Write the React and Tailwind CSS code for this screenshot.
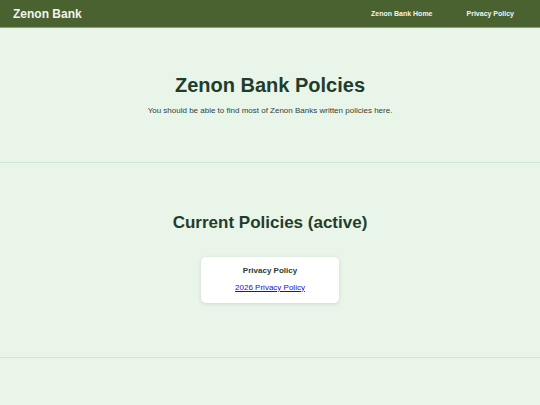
export default function App() {
  return (
    <div className="min-h-[405px] bg-[#eaf5ea] font-['Liberation_Sans',Arial,sans-serif]">
      <header className="h-[28px] bg-[#4a6130] border-b border-[#86a46c] flex items-center justify-between pl-[13px] pr-[26px]">
        <div className="text-[12px] font-bold text-[#f2f5ee] leading-none">Zenon Bank</div>
        <nav className="flex items-center gap-[34px] text-[7px] font-bold text-[#f2f5ee] leading-none">
          <a href="#">Zenon Bank Home</a>
          <a href="#">Privacy Policy</a>
        </nav>
      </header>
      <section className="pt-[45px] pb-[46px] text-center border-b border-[#cfe6cf]">
        <h1 className="text-[20px] leading-[1.2] font-bold text-[#1f3d2b]">Zenon Bank Polcies</h1>
        <p className="mt-[9px] text-[8px] leading-[1.2] text-[#2d4436]">
          You should be able to find most of Zenon Banks written policies here.
        </p>
      </section>
      <section className="pt-[50px] pb-[54px] border-b border-[#cfe6cf] flex flex-col items-center">
        <h2 className="text-[17px] leading-[1.2] font-bold text-[#1f3d2b]">Current Policies (active)</h2>
        <div className="mt-[24px] w-[138px] h-[46px] bg-white rounded-[5px] shadow-[0_1px_4px_rgba(0,0,0,0.12)] flex flex-col items-center pt-[9px]">
          <div className="text-[8px] leading-[1.2] font-bold text-[#2b3a30]">Privacy Policy</div>
          <a href="#" className="mt-[7px] text-[8px] leading-[1.2] text-[#1a0dd9] underline">2026 Privacy Policy</a>
        </div>
      </section>
    </div>
  );
}
